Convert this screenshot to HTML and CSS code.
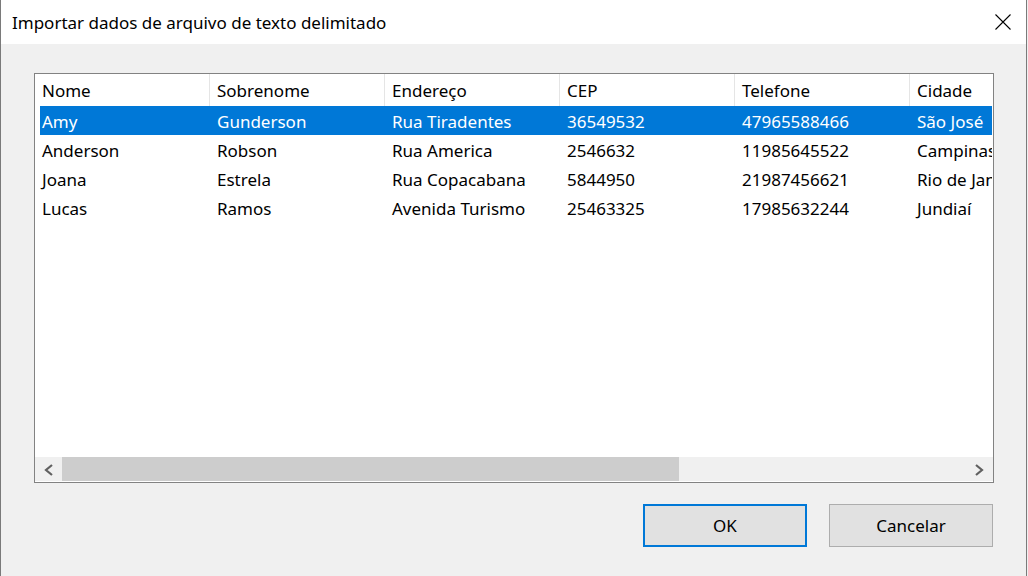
FILE: index.html
```html
<!DOCTYPE html>
<html lang="pt">
<head>
<meta charset="utf-8">
<title>Importar dados de arquivo de texto delimitado</title>
<link rel="stylesheet" href="styles.css">
</head>
<body>
<div class="window">
  <div class="titlebar">
    <div class="title">Importar dados de arquivo de texto delimitado</div>
    <div class="close">
      <svg width="16" height="16" viewBox="0 0 16 16"><path d="M0.5 0.5 L15.5 15.5 M15.5 0.5 L0.5 15.5" stroke="#000" stroke-width="1.1" fill="none"/></svg>
    </div>
  </div>
  <div class="content">
    <div class="list">
      <div class="view">
        <div class="header">
          <div class="hcell">Nome</div>
          <div class="hcell">Sobrenome</div>
          <div class="hcell">Endereço</div>
          <div class="hcell">CEP</div>
          <div class="hcell">Telefone</div>
          <div class="hcell">Cidade</div>
        </div>
        <div class="row selected">
          <div class="cell">Amy</div>
          <div class="cell">Gunderson</div>
          <div class="cell">Rua Tiradentes</div>
          <div class="cell">36549532</div>
          <div class="cell">47965588466</div>
          <div class="cell">São José</div>
        </div>
        <div class="row">
          <div class="cell">Anderson</div>
          <div class="cell">Robson</div>
          <div class="cell">Rua America</div>
          <div class="cell">2546632</div>
          <div class="cell">11985645522</div>
          <div class="cell">Campinas</div>
        </div>
        <div class="row">
          <div class="cell">Joana</div>
          <div class="cell">Estrela</div>
          <div class="cell">Rua Copacabana</div>
          <div class="cell">5844950</div>
          <div class="cell">21987456621</div>
          <div class="cell">Rio de Janeiro</div>
        </div>
        <div class="row">
          <div class="cell">Lucas</div>
          <div class="cell">Ramos</div>
          <div class="cell">Avenida Turismo</div>
          <div class="cell">25463325</div>
          <div class="cell">17985632244</div>
          <div class="cell">Jundiaí</div>
        </div>
      </div>
      <div class="hscroll">
        <div class="sbtn">
          <svg width="27" height="24" viewBox="0 0 27 24"><polyline points="17,8 11,13 17,18" stroke="#606060" stroke-width="2.2" fill="none"/></svg>
        </div>
        <div class="track"><div class="thumb"></div></div>
        <div class="sbtn">
          <svg width="27" height="24" viewBox="0 0 27 24"><polyline points="10,8 16,13 10,18" stroke="#606060" stroke-width="2.2" fill="none"/></svg>
        </div>
      </div>
    </div>
    <div class="footer">
      <button class="btn default">OK</button>
      <button class="btn">Cancelar</button>
    </div>
  </div>
</div>
</body>
</html>
```
FILE: styles.css
```css
html, body {
  margin: 0;
  padding: 0;
  background: #f0f0f0;
}
body {
  font-family: "Noto Sans", "Liberation Sans", sans-serif;
  font-size: 17px;
  color: #000;
}
.window {
  width: 1027px;
  height: 576px;
  box-sizing: border-box;
  border-left: 1px solid #7a7a7a;
  border-right: 1px solid #7a7a7a;
  background: #f0f0f0;
  overflow: hidden;
}
.titlebar {
  height: 44px;
  background: #fff;
  display: flex;
  align-items: center;
  justify-content: space-between;
}
.title {
  padding-left: 11px;
  font-size: 17px;
  line-height: 22px;
  padding-top: 1px;
}
.close {
  width: 46px;
  height: 44px;
  display: flex;
  align-items: center;
  justify-content: center;
}
.content {
  padding: 29px 0 0 33px;
}
.list {
  width: 960px;
  height: 410px;
  box-sizing: border-box;
  border: 1px solid #828282;
  background: #fff;
  display: flex;
  flex-direction: column;
  padding-bottom: 1px;
}
.view {
  flex: 1;
  overflow: hidden;
  white-space: nowrap;
}
.header {
  display: flex;
  height: 32px;
}
.hcell {
  flex: 0 0 175px;
  box-sizing: border-box;
  padding: 3px 0 0 7px;
  line-height: 28px;
  border-right: 1px solid #e5e5e5;
}
.row {
  display: flex;
  height: 29px;
  box-sizing: border-box;
  padding-top: 2px;
  line-height: 27px;
  margin-left: 5px;
  width: 952px;
  overflow: hidden;
}
.cell {
  flex: 0 0 175px;
  box-sizing: border-box;
  padding-left: 7px;
  overflow: hidden;
}
.cell:first-child {
  flex-basis: 170px;
  padding-left: 2px;
}
.cell:last-child {
  flex-basis: 82px;
}
.row.selected {
  background: #0078d7;
  color: #fff;
}
.hscroll {
  height: 24px;
  display: flex;
  background: #f0f0f0;
}
.sbtn {
  flex: 0 0 27px;
  height: 24px;
}
.sbtn svg {
  display: block;
}
.track {
  flex: 1;
  display: flex;
}
.thumb {
  width: 617px;
  background: #cdcdcd;
}
.footer {
  width: 959px;
  display: flex;
  justify-content: flex-end;
  gap: 22px;
  margin-top: 21px;
}
.btn {
  width: 164px;
  height: 43px;
  box-sizing: border-box;
  background: #e1e1e1;
  border: 1px solid #adadad;
  font-family: "Noto Sans", "Liberation Sans", sans-serif;
  font-size: 17px;
  color: #000;
  padding: 0;
  margin: 0;
}
.btn.default {
  border: 2px solid #0078d7;
}
```
